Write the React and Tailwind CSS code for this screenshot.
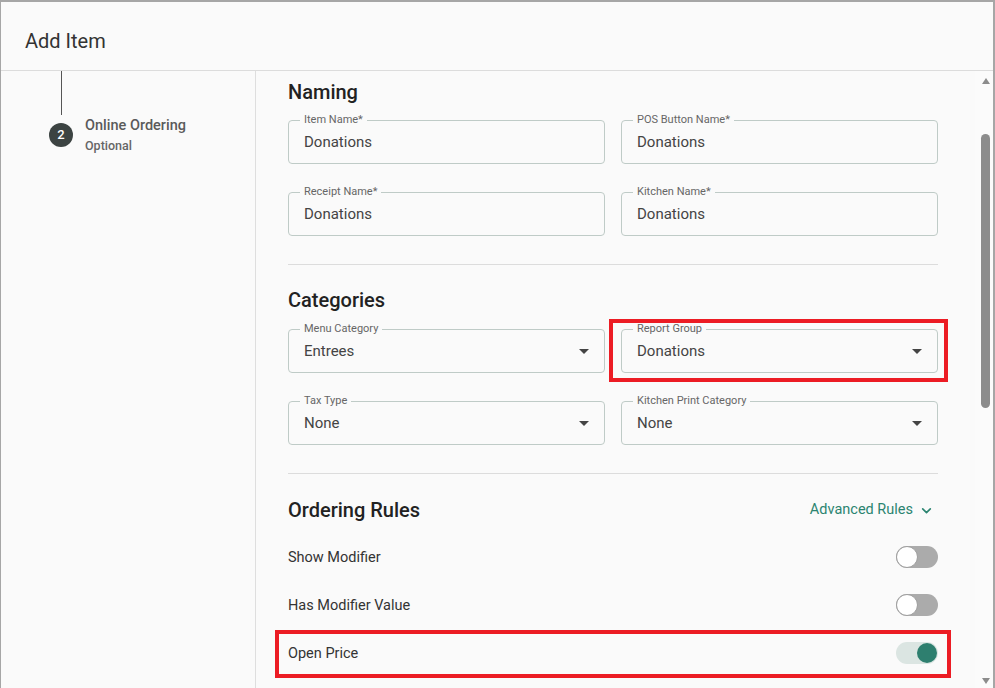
import React from 'react';

const font = { fontFamily: 'Roboto, "Liberation Sans", sans-serif' };

// Outlined text field / select with floating label
const Field = ({ label, value, select, highlight }) => (
  <div className="relative h-[44px] rounded-[4px] border border-[#bfcbc7] flex items-center pl-[15px] pr-[8px]">
    <span className="absolute -top-[8px] left-[11px] bg-[#fafafa] px-[4px] text-[11px] leading-[14px] text-[#666]">
      {label}
    </span>
    <span className="flex-1 text-[15px] text-[#444]">{value}</span>
    {select && (
      <svg width="24" height="24" viewBox="0 0 24 24" className="fill-[#444]">
        <path d="M7 10l5 5 5-5z" />
      </svg>
    )}
    {highlight && (
      <div className="absolute -top-[11px] -bottom-[10px] -left-[13px] -right-[11px] border-4 border-[#ec1c24]" />
    )}
  </div>
);

const Toggle = ({ on }) =>
  on ? (
    <div className="w-[42px] h-[22px] rounded-full bg-[#dbe5e2] flex items-center justify-end pr-[1px]">
      <div className="w-[20px] h-[20px] rounded-full bg-[#2e7f6f]" />
    </div>
  ) : (
    <div className="w-[42px] h-[22px] rounded-full bg-[#ababab] flex items-center">
      <div className="w-[22px] h-[22px] rounded-full bg-white border border-[#9e9e9e]" />
    </div>
  );

const Heading = ({ children }) => (
  <h2 className="text-[20px] leading-[28px] font-medium text-[#222]">{children}</h2>
);

const rules = [
  { label: 'Show Modifier', on: false },
  { label: 'Has Modifier Value', on: false },
  { label: 'Open Price', on: true, highlight: true },
];

export default function App() {
  return (
    <div
      style={font}
      className="w-[995px] h-[688px] overflow-hidden flex flex-col bg-[#fafafa] border-t-2 border-l border-r-2 border-[#a6a6a6]"
    >
      {/* Header */}
      <div className="h-[69px] shrink-0 border-b border-[#dcdcdc] pt-[25px] px-[24px]">
        <h1 className="text-[20px] leading-[28px] text-[#333]">Add Item</h1>
      </div>

      <div className="flex flex-1 min-h-0">
        {/* Stepper */}
        <div className="w-[255px] shrink-0 border-r border-[#dedede] pl-[48px]">
          <div className="ml-[12px] w-px h-[44px] bg-[#555]" />
          <div className="flex gap-[12px]">
            <div className="mt-[8px] w-[24px] h-[24px] rounded-full bg-[#3c4342] flex items-center justify-center text-white text-[13px] font-medium">
              2
            </div>
            <div className="pt-[1px]">
              <p className="text-[14.5px] leading-[20px] font-medium text-[#5a5a5a]">Online Ordering</p>
              <p className="mt-[2px] text-[12.5px] leading-[16px] font-medium text-[#666]">Optional</p>
            </div>
          </div>
        </div>

        {/* Form */}
        <div className="flex-1 min-w-0 overflow-hidden pl-[32px] pr-[37px] pt-[7px]">
          <Heading>Naming</Heading>
          <div className="mt-[14px] grid grid-cols-2 gap-x-[16px] gap-y-[28px]">
            <Field label="Item Name*" value="Donations" />
            <Field label="POS Button Name*" value="Donations" />
            <Field label="Receipt Name*" value="Donations" />
            <Field label="Kitchen Name*" value="Donations" />
          </div>

          <div className="mt-[28px] h-px bg-[#dcdcdc]" />

          <div className="mt-[21px]">
            <Heading>Categories</Heading>
          </div>
          <div className="mt-[15px] grid grid-cols-2 gap-x-[16px] gap-y-[28px]">
            <Field label="Menu Category" value="Entrees" select />
            <Field label="Report Group" value="Donations" select highlight />
            <Field label="Tax Type" value="None" select />
            <Field label="Kitchen Print Category" value="None" select />
          </div>

          <div className="mt-[28px] h-px bg-[#dcdcdc]" />

          <div className="mt-[22px] flex items-center justify-between">
            <Heading>Ordering Rules</Heading>
            <button className="flex items-center gap-[7px] pr-[5px] text-[14.5px] text-[#2b8470]">
              Advanced Rules
              <svg width="13" height="13" viewBox="0 0 24 24" fill="none" stroke="currentColor" strokeWidth="3" strokeLinecap="round" strokeLinejoin="round">
                <path d="M5 9l7 7 7-7" />
              </svg>
            </button>
          </div>

          <div className="mt-[9px]">
            {rules.map((rule) => (
              <div key={rule.label} className="relative h-[48px] flex items-center justify-between">
                <span className="pt-[2px] text-[14.5px] text-[#333]">{rule.label}</span>
                <Toggle on={rule.on} />
                {rule.highlight && (
                  <div className="absolute top-[1px] -bottom-[1px] -left-[13px] -right-[13px] border-4 border-[#ec1c24]" />
                )}
              </div>
            ))}
          </div>
        </div>

        {/* Scrollbar */}
        <div className="w-[18px] shrink-0 flex flex-col items-center pl-[3px] pt-[7px] pb-[4px] bg-[#fbfbfb]">
          <svg width="8" height="6" viewBox="0 0 8 6" className="fill-[#8c8c8c]">
            <path d="M4 0L8 6H0z" />
          </svg>
          <div className="mt-[50px] w-[9px] h-[274px] rounded-full bg-[#8c8c8c]" />
          <div className="flex-1" />
          <svg width="8" height="6" viewBox="0 0 8 6" className="fill-[#8c8c8c]">
            <path d="M0 0H8L4 6z" />
          </svg>
        </div>
      </div>
    </div>
  );
}
